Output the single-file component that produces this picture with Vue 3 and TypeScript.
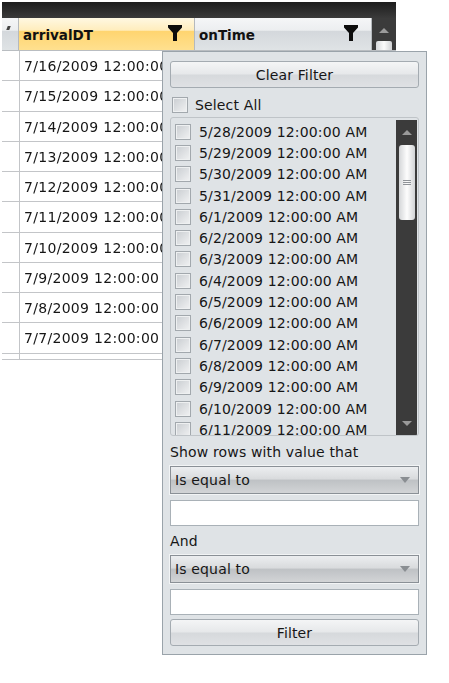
<script setup lang="ts">
const rows = ['7/16/2009 12:00:00 AM','7/15/2009 12:00:00 AM','7/14/2009 12:00:00 AM','7/13/2009 12:00:00 AM','7/12/2009 12:00:00 AM','7/11/2009 12:00:00 AM','7/10/2009 12:00:00 AM','7/9/2009 12:00:00 AM','7/8/2009 12:00:00 AM','7/7/2009 12:00:00 AM']
const dates = ['5/28/2009','5/29/2009','5/30/2009','5/31/2009','6/1/2009','6/2/2009','6/3/2009','6/4/2009','6/5/2009','6/6/2009','6/7/2009','6/8/2009','6/9/2009','6/10/2009','6/11/2009'].map(d => d + ' 12:00:00 AM')
</script>

<template>
  <div class="page">
    <div class="grid">
      <div class="topbar"></div>
      <div class="head">
        <div class="hcell stub"><i class="tip"></i></div>
        <div class="hcell active">
          <span>arrivalDT</span>
          <svg class="funnel" viewBox="0 0 14 16"><path d="M0 0H14V2.5L9 8V16H5V8L0 2.5Z" /></svg>
        </div>
        <div class="hcell ontime">
          <span>onTime</span>
          <svg class="funnel" viewBox="0 0 14 16"><path d="M0 0H14V2.5L9 8V16H5V8L0 2.5Z" /></svg>
        </div>
        <div class="gridscroll">
          <i class="up"></i>
          <b class="gthumb"></b>
        </div>
      </div>
      <div v-for="r in rows" :key="r" class="row">
        <div class="stubcell"></div>
        <div class="cell">{{ r }}</div>
      </div>
      <div class="row tail"><div class="stubcell"></div></div>

      <div class="popup">
        <button class="btn">Clear Filter</button>
        <label class="selall"><i class="check"></i>Select All</label>
        <div class="list">
          <div class="items">
            <div v-for="d in dates" :key="d" class="item"><i class="check"></i>{{ d }}</div>
          </div>
          <div class="lscroll">
            <i class="up"></i>
            <b class="lthumb"><u></u><u></u><u></u></b>
            <i class="down"></i>
          </div>
        </div>
        <div class="label first">Show rows with value that</div>
        <div class="combo"><span>Is equal to</span><i class="carrow"></i></div>
        <div class="field"></div>
        <div class="label second">And</div>
        <div class="combo"><span>Is equal to</span><i class="carrow"></i></div>
        <div class="field"></div>
        <button class="btn last">Filter</button>
      </div>
    </div>
  </div>
</template>

<style>
html, body { margin: 0; background: #fff; }
</style>

<style scoped>
.page {
  width: 449px;
  height: 683px;
  padding: 2px 0 0 2px;
  box-sizing: border-box;
  font-family: "DejaVu Sans", sans-serif;
  font-size: 14px;
  letter-spacing: 0.15px;
  color: #161616;
  overflow: hidden;
  filter: blur(0.3px);
}
.grid { position: relative; width: 394px; }
.topbar { height: 16px; background: linear-gradient(#1d1d1d, #3a3a3a); }
.head { display: flex; height: 33px; box-sizing: border-box; border-bottom: 1px solid #b9bdc1; }
.hcell {
  box-sizing: border-box;
  display: flex;
  align-items: center;
  justify-content: space-between;
  font-weight: 700;
  font-size: 13.5px;
  letter-spacing: 0;
  padding-top: 2px;
  color: #111;
  background: linear-gradient(#f5f6f7 0%, #eceef0 38%, #d4d8dc 42%, #dfe3e5 100%);
  border-right: 1px solid #b5b9bd;
}
.stub { width: 17px; position: relative; }
.tip { position: absolute; left: 5px; top: 8px; width: 3px; height: 4px; background: #444; transform: skewX(-20deg); }
.active {
  width: 176px;
  padding: 2px 12px 0 4px;
  background: linear-gradient(#fff8e2 0%, #ffedbd 38%, #ffd570 42%, #ffe08f 100%);
}
.ontime { width: 177px; padding: 2px 13px 0 4px; }
.funnel { width: 14px; height: 16px; margin-bottom: 4px; fill: #0c0c0c; }
.gridscroll {
  position: relative;
  flex: 1;
  background: #3b3b3b;
  display: flex;
  flex-direction: column;
  align-items: center;
}
.up { width: 0; height: 0; border: 5px solid transparent; border-top: 0; border-bottom: 5px solid #9a9a9a; margin-top: 10px; }
.down { width: 0; height: 0; border: 5px solid transparent; border-bottom: 0; border-top: 5px solid #9a9a9a; margin-bottom: 9px; }
.gthumb { width: 16px; flex: 1; margin-top: 8px; background: linear-gradient(90deg, #d6d8da, #fbfbfb 50%, #d0d2d4); border-radius: 2px 2px 0 0; }
.row {
  display: flex;
  height: 30.25px;
  box-sizing: border-box;
  border-bottom: 1px solid #c3c5c8;
}
.row.tail { height: 6px; }
.stubcell { width: 17px; border-right: 1px solid #c3c5c8; flex: none; }
.cell {
  padding: 2px 0 0 4px;
  line-height: 26px;
  white-space: nowrap;
  letter-spacing: 0.3px;
}
.popup {
  position: absolute;
  left: 160px;
  top: 49px;
  width: 265px;
  height: 604px;
  box-sizing: border-box;
  padding: 9px 7px 0;
  background: #dfe3e6;
  border: 1px solid #9aa3aa;
  display: flex;
  flex-direction: column;
}
.btn {
  display: block;
  width: 100%;
  height: 27px;
  padding: 0;
  flex: none;
  font: inherit;
  letter-spacing: inherit;
  color: #161616;
  background: linear-gradient(#f4f5f6, #e6e8ea 48%, #d6d9dc 52%, #dfe1e4);
  border: 1px solid #a4abb1;
  border-radius: 3px;
}
.btn.last { margin-top: 4px; }
.selall { display: flex; align-items: center; height: 17px; margin: 8px 0 4px 2px; }
.check {
  flex: none;
  width: 16px;
  height: 16px;
  box-sizing: border-box;
  margin-right: 7px;
  border: 1px solid #a2a8ad;
  outline: 1px solid #eef0f1;
  outline-offset: -2px;
  background: linear-gradient(135deg, #c9cdd1, #f1f2f3);
}
.item .check { margin-right: 8px; }
.list {
  position: relative;
  height: 319px;
  flex: none;
  box-sizing: border-box;
  padding: 2px 1px 0 4px;
  border: 1px solid #bfc4c8;
  border-radius: 3px;
  display: flex;
  justify-content: space-between;
  overflow: hidden;
}
.items { overflow: hidden; flex: 1; padding-top: 1px; }
.item { display: flex; align-items: center; height: 21.3px; white-space: nowrap; }
.lscroll {
  width: 21px;
  flex: none;
  background: #3b3b3b;
  display: flex;
  flex-direction: column;
  align-items: center;
}
.lthumb {
  width: 16px;
  height: 75px;
  margin: 10px 0 auto;
  display: flex;
  flex-direction: column;
  justify-content: center;
  align-items: center;
  gap: 1px;
  background: linear-gradient(90deg, #d4d6d8, #fdfdfd 50%, #d0d2d4);
  border-radius: 3px;
}
.lthumb u { display: block; width: 8px; height: 1px; background: #8f9398; }
.label { height: 17px; line-height: 17px; flex: none; }
.label.first { margin: 8px 0 5px; }
.label.second { margin: 7px 0 5px; }
.combo {
  height: 28px;
  flex: none;
  box-sizing: border-box;
  display: flex;
  align-items: center;
  justify-content: space-between;
  padding: 0 8px 0 4px;
  border: 1px solid #8a9096;
  outline: 1px solid #f2f4f5;
  background: linear-gradient(#eceef0, #d9dbdd 45%, #bfc2c5 52%, #d2d4d6);
}
.carrow { width: 0; height: 0; border: 5px solid transparent; border-bottom: 0; border-top: 6px solid #8a8e92; border-left-width: 5.5px; border-right-width: 5.5px; }
.field {
  height: 26px;
  flex: none;
  margin-top: 6px;
  box-sizing: border-box;
  background: #fff;
  border: 1px solid #a9b1b7;
}
</style>
